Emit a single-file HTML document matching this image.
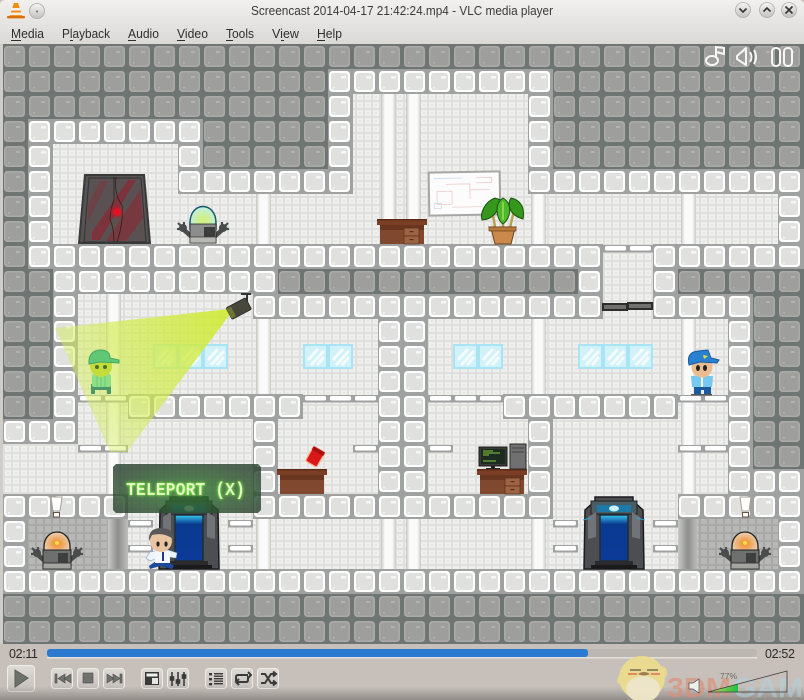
<!DOCTYPE html>
<html><head><meta charset="utf-8"><title>VLC</title>
<style>html,body{margin:0;padding:0;width:804px;height:700px;overflow:hidden;background:#c6bfba}svg{display:block}
text{font-family:"Liberation Sans",sans-serif}</style></head><body>
<svg xmlns="http://www.w3.org/2000/svg" width="804" height="700" viewBox="0 0 804 700">
<defs>
<pattern id="d" x="3" y="44" width="25" height="25" patternUnits="userSpaceOnUse">
<rect width="25" height="25" fill="#6f7573"/><rect x="1" y="2" width="21" height="21" rx="3.5" fill="#aaaaa8"/><rect x="2.500" y="3.500" width="18" height="18" rx="3" fill="#9e9e9c"/><rect x="13" y="7" width="4" height="2" fill="#b2b2b0"/><rect x="5" y="18" width="2" height="1.500" fill="#b2b2b0"/></pattern>
<pattern id="w" x="3" y="44" width="25" height="25" patternUnits="userSpaceOnUse">
<rect width="25" height="25" fill="#a0a2a2"/><rect x="1" y="2" width="21" height="21" rx="3.500" fill="#fff"/><rect x="3" y="4" width="17" height="17" rx="3" fill="#e0e0de"/><rect x="13" y="7" width="5" height="2.500" fill="#f6f6f6"/><rect x="5" y="18" width="2" height="1.500" fill="#f2f2f2"/></pattern>
<pattern id="b" x="3" y="44" width="8" height="8" patternUnits="userSpaceOnUse">
<rect width="8" height="8" fill="#efefee"/><rect width="8" height="2" fill="#dfdfde"/><rect width="2" height="8" fill="#dfdfde"/><rect x="4" y="4" width="2" height="2" fill="#e6e6e5"/></pattern>
<pattern id="s" x="3" y="44" width="8" height="8" patternUnits="userSpaceOnUse">
<rect width="8" height="8" fill="#b8b8b6"/><rect width="8" height="2" fill="#a8a8a6"/><rect width="2" height="8" fill="#a8a8a6"/></pattern>
<linearGradient id="title" x1="0" y1="0" x2="0" y2="1"><stop offset="0" stop-color="#f1f0ee"/><stop offset="1" stop-color="#dbd9d6"/></linearGradient>
<linearGradient id="btn" x1="0" y1="0" x2="0" y2="1"><stop offset="0" stop-color="#dedad6"/><stop offset="1" stop-color="#c4bfba"/></linearGradient>
<linearGradient id="circ" x1="0" y1="0" x2="0" y2="1"><stop offset="0" stop-color="#f4f4f2"/><stop offset="1" stop-color="#c4c2be"/></linearGradient>
<linearGradient id="pil" x1="0" y1="0" x2="1" y2="0"><stop offset="0" stop-color="#c4c4c2"/><stop offset=".25" stop-color="#fafafa"/><stop offset=".75" stop-color="#fafafa"/><stop offset="1" stop-color="#cacac8"/></linearGradient>
<linearGradient id="pilD" x1="0" y1="0" x2="1" y2="0"><stop offset="0" stop-color="#c8c8c6"/><stop offset=".5" stop-color="#8e8e8c"/><stop offset="1" stop-color="#c0c0be"/></linearGradient>
<radialGradient id="cone" gradientUnits="userSpaceOnUse" cx="230" cy="310" r="190"><stop offset="0" stop-color="#cfea30" stop-opacity=".9"/><stop offset=".6" stop-color="#d2ec50" stop-opacity=".68"/><stop offset="1" stop-color="#d4ee60" stop-opacity=".4"/></radialGradient>
<radialGradient id="greend" cx=".5" cy=".6" r=".6"><stop offset="0" stop-color="#d4f070"/><stop offset="1" stop-color="#bfeee8"/></radialGradient>
<radialGradient id="orad" cx=".5" cy=".55" r=".6"><stop offset="0" stop-color="#f28a20"/><stop offset="1" stop-color="#e8d8c8"/></radialGradient>
<radialGradient id="panelg" cx=".5" cy=".55" r=".6"><stop offset="0" stop-color="#2f7a2c"/><stop offset="1" stop-color="#2c4430"/></radialGradient>
<linearGradient id="volg" x1="0" y1="0" x2="1" y2="0"><stop offset="0" stop-color="#d8d060"/><stop offset="1" stop-color="#20c040"/></linearGradient>
<linearGradient id="darkbot" x1="0" y1="0" x2="0" y2="1"><stop offset="0" stop-color="#8a8682" stop-opacity="0"/><stop offset="1" stop-color="#7a7672" stop-opacity=".7"/></linearGradient>
<linearGradient id="tele" x1="0" y1="0" x2="0" y2="1"><stop offset="0" stop-color="#38c8f0"/><stop offset=".2" stop-color="#0a3a90"/><stop offset="1" stop-color="#0c3a98"/></linearGradient>

<g id="plat"><rect width="25" height="7.500" fill="#a0a2a2"/><rect x="2" y="1" width="21" height="4.500" rx="1.500" fill="#fff"/></g>
<g id="pane"><rect width="25" height="25" fill="#a8e4f4"/><rect x="2" y="2" width="21" height="21" fill="#d2f2fa"/><path d="M5 16 L15 5 M8 21 L21 7 M14 21 L21 13" stroke="#f4fcff" stroke-width="3" fill="none"/></g>
<g id="desk"><rect x="0" y="0" width="50" height="6" fill="#7a3f24"/><rect x="0" y="0" width="50" height="1.500" fill="#5c2c18"/><rect x="3" y="6" width="44" height="19" fill="#80492f"/><rect x="3" y="6" width="44" height="5" fill="#6a3620"/></g>
<g id="draw"><rect x="0" y="0" width="15" height="8" fill="#9c6344" stroke="#5c3018" stroke-width=".7"/><rect x="0" y="8" width="15" height="8" fill="#9c6344" stroke="#5c3018" stroke-width=".7"/><rect x="5.500" y="3" width="4" height="1.200" fill="#5c3018"/><rect x="5.500" y="11" width="4" height="1.200" fill="#5c3018"/></g>
<g id="arm"><path d="M3 3 L-5 -4" stroke="#4a4c4c" stroke-width="4.500"/><circle cx="-6" cy="-6" r="4" fill="#4a4c4c"/><path d="M-8 -8 L-11 -11 M-5 -9 L-5 -12 M-9 -5 L-12 -5" stroke="#4a4c4c" stroke-width="2.200"/></g>
<g id="robotBase"><rect x="-14" y="-19" width="28" height="19" fill="#6e7070" stroke="#222" stroke-width="1"/><rect x="-14" y="-6" width="28" height="6" fill="#a4a4a2" stroke="#222" stroke-width=".8"/><rect x="1" y="-16" width="10" height="10" fill="#3e3e3e"/></g>
<g id="teleporter"><path d="M2 13 L12 4 L12 0 L50 0 L50 4 L60 13 L61 72 L1 72 Z" fill="#4c4e52" stroke="#1c1c1e" stroke-width="1.500"/><rect x="8" y="4" width="46" height="13" fill="#4a5c64" stroke="#222" stroke-width="1"/><rect x="14" y="8" width="34" height="7" fill="#1c7aa8"/><ellipse cx="31" cy="11.500" rx="5" ry="3" fill="#c8f0ff"/><rect x="17" y="18" width="28" height="46" fill="url(#tele)" stroke="#1e2e38" stroke-width="1.500"/><path d="M5 20 L13 15 L13 40 L5 42 Z M57 20 L49 15 L49 40 L57 42 Z" fill="#707478"/><rect x="12" y="64" width="38" height="4" fill="#2a2a2c"/><rect x="8" y="68" width="46" height="4" fill="#1a1a1c"/></g>
<g id="excl"><path d="M0 0 L11 0 L9 14 L2 14 Z" fill="#fff" stroke="#a8a298" stroke-width="1"/><rect x="2.500" y="15.500" width="6" height="4.500" fill="#fff" stroke="#6a5040" stroke-width="1"/></g>
</defs>

<rect width="804" height="700" fill="#c6bfba"/>
<!-- title bar -->
<path d="M0 44 V5 Q0 0 5 0 H799 Q804 0 804 5 V44 Z" fill="url(#title)"/>
<rect x="0" y="44" width="3" height="600" fill="#d0cdc9"/>
<!-- VLC cone -->
<g><path d="M14 3 L18 3 L23 18 L9 18 Z" fill="#f08a10"/><rect x="11.300" y="8" width="9" height="2.600" fill="#f4f0e8"/><rect x="10" y="12.500" width="12" height="2.600" fill="#f4f0e8"/><rect x="7" y="16" width="18" height="2.400" rx="1" fill="#d87008"/></g>
<circle cx="37" cy="11" r="7.500" fill="url(#circ)" stroke="#aaa8a4" stroke-width=".8"/><circle cx="37" cy="11.500" r="1" fill="#666"/>
<text x="251" y="15" font-size="12.500" fill="#3a3a38" textLength="302" lengthAdjust="spacingAndGlyphs">Screencast 2014-04-17 21:42:24.mp4 - VLC media player</text>
<circle cx="743" cy="10" r="7.500" fill="url(#circ)" stroke="#b0aeaa" stroke-width=".8"/><path d="M739.500 8.500 L743 12 L746.500 8.500" stroke="#333" stroke-width="1.600" fill="none"/>
<circle cx="767" cy="10" r="7.500" fill="url(#circ)" stroke="#b0aeaa" stroke-width=".8"/><path d="M763.500 11.500 L767 8 L770.500 11.500" stroke="#333" stroke-width="1.600" fill="none"/>
<circle cx="789" cy="10" r="7.500" fill="url(#circ)" stroke="#b0aeaa" stroke-width=".8"/><path d="M785.500 6.500 L792.500 13.500 M792.500 6.500 L785.500 13.500" stroke="#333" stroke-width="1.600" fill="none"/>
<!-- menu -->
<g font-size="12.500" fill="#2e2e2c">
<text x="11" y="38" textLength="33" lengthAdjust="spacingAndGlyphs">Media</text><rect x="11" y="40" width="10" height="1" fill="#2e2e2c"/>
<text x="62" y="38" textLength="48" lengthAdjust="spacingAndGlyphs">Playback</text><rect x="70" y="40" width="3" height="1" fill="#2e2e2c"/>
<text x="128" y="38" textLength="31" lengthAdjust="spacingAndGlyphs">Audio</text><rect x="128" y="40" width="8" height="1" fill="#2e2e2c"/>
<text x="177" y="38" textLength="31" lengthAdjust="spacingAndGlyphs">Video</text><rect x="177" y="40" width="8" height="1" fill="#2e2e2c"/>
<text x="226" y="38" textLength="28" lengthAdjust="spacingAndGlyphs">Tools</text><rect x="226" y="40" width="7" height="1" fill="#2e2e2c"/>
<text x="272" y="38" textLength="27" lengthAdjust="spacingAndGlyphs">View</text><rect x="281" y="40" width="3" height="1" fill="#2e2e2c"/>
<text x="317" y="38" textLength="25" lengthAdjust="spacingAndGlyphs">Help</text><rect x="317" y="40" width="8" height="1" fill="#2e2e2c"/>
</g>

<!-- game background -->
<rect x="3" y="44" width="801" height="600" fill="url(#b)"/>
<!-- pillars -->
<g fill="url(#pil)">
<rect x="381" y="94" width="15" height="150"/><rect x="406" y="94" width="15" height="150"/>
<rect x="256" y="194" width="15" height="50"/><rect x="531" y="194" width="15" height="50"/><rect x="681" y="194" width="15" height="50"/>
<rect x="106" y="294" width="15" height="200"/><rect x="256" y="319" width="15" height="75"/><rect x="531" y="319" width="15" height="75"/><rect x="681" y="319" width="15" height="175"/>
<rect x="256" y="519" width="15" height="50"/><rect x="381" y="519" width="15" height="50"/><rect x="406" y="519" width="15" height="50"/><rect x="531" y="519" width="15" height="50"/>
</g>
<!-- shaded rooms -->
<rect x="28" y="519" width="82" height="50" fill="url(#s)"/><rect x="108" y="519" width="20" height="50" fill="url(#pilD)"/>
<rect x="695" y="519" width="83" height="50" fill="url(#s)"/><rect x="678" y="519" width="20" height="50" fill="url(#pilD)"/>

<!-- dark tiles -->
<g fill="url(#d)">
<rect x="3" y="44" width="801" height="25"/><rect x="3" y="69" width="325" height="50"/><rect x="553" y="69" width="251" height="100"/>
<rect x="3" y="119" width="25" height="150"/><rect x="203" y="119" width="125" height="50"/><rect x="3" y="269" width="50" height="150"/>
<rect x="278" y="269" width="300" height="25"/><rect x="678" y="269" width="126" height="25"/><rect x="753" y="294" width="51" height="175"/>
<rect x="3" y="594" width="801" height="50"/>
</g>
<!-- white tiles -->
<g fill="url(#w)">
<rect x="328" y="69" width="225" height="25"/><rect x="328" y="94" width="25" height="75"/><rect x="528" y="94" width="25" height="75"/>
<rect x="28" y="119" width="175" height="25"/><rect x="28" y="144" width="25" height="100"/><rect x="178" y="144" width="25" height="25"/>
<rect x="178" y="169" width="175" height="25"/><rect x="528" y="169" width="276" height="25"/><rect x="778" y="194" width="26" height="50"/>
<rect x="28" y="244" width="575" height="25"/><rect x="653" y="244" width="151" height="25"/>
<rect x="53" y="269" width="225" height="25"/><rect x="578" y="269" width="25" height="25"/><rect x="653" y="269" width="25" height="25"/>
<rect x="53" y="294" width="25" height="125"/><rect x="253" y="294" width="350" height="25"/><rect x="653" y="294" width="100" height="25"/>
<rect x="378" y="319" width="50" height="175"/><rect x="728" y="319" width="25" height="150"/>
<rect x="128" y="394" width="175" height="25"/><rect x="503" y="394" width="175" height="25"/>
<rect x="728" y="469" width="76" height="25"/><rect x="3" y="419" width="75" height="25"/>
<rect x="253" y="419" width="25" height="75"/><rect x="528" y="419" width="25" height="75"/>
<rect x="3" y="494" width="125" height="25"/><rect x="253" y="494" width="300" height="25"/><rect x="678" y="494" width="126" height="25"/>
<rect x="3" y="519" width="25" height="50"/><rect x="778" y="519" width="26" height="50"/>
<rect x="3" y="569" width="801" height="25"/>
</g>

<!-- thin platforms -->
<use href="#plat" x="78" y="395"/><use href="#plat" x="103" y="395"/><use href="#plat" x="303" y="395"/><use href="#plat" x="328" y="395"/><use href="#plat" x="353" y="395"/>
<use href="#plat" x="428" y="395"/><use href="#plat" x="453" y="395"/><use href="#plat" x="478" y="395"/><use href="#plat" x="678" y="395"/><use href="#plat" x="703" y="395"/>
<use href="#plat" x="78" y="445"/><use href="#plat" x="103" y="445"/><use href="#plat" x="353" y="445"/><use href="#plat" x="428" y="445"/><use href="#plat" x="678" y="445"/><use href="#plat" x="703" y="445"/>
<use href="#plat" x="603" y="245"/><use href="#plat" x="628" y="245"/>
<use href="#plat" x="128" y="520"/><use href="#plat" x="128" y="545"/><use href="#plat" x="228" y="520"/><use href="#plat" x="228" y="545"/>
<use href="#plat" x="553" y="520"/><use href="#plat" x="553" y="545"/><use href="#plat" x="653" y="520"/><use href="#plat" x="653" y="545"/>
<rect x="602" y="303" width="26" height="8" fill="#2c2c2c"/><rect x="604" y="305" width="22" height="4" fill="#706f6c"/>
<rect x="627" y="302" width="26" height="8" fill="#2c2c2c"/><rect x="629" y="304" width="22" height="4" fill="#706f6c"/>

<!-- windows -->
<use href="#pane" x="153" y="344"/><use href="#pane" x="178" y="344"/><use href="#pane" x="203" y="344"/>
<use href="#pane" x="303" y="344"/><use href="#pane" x="328" y="344"/>
<use href="#pane" x="453" y="344"/><use href="#pane" x="478" y="344"/>
<use href="#pane" x="578" y="344"/><use href="#pane" x="603" y="344"/><use href="#pane" x="628" y="344"/>

<!-- red door -->
<path d="M85 175 H144 L150 243 H79 Z" fill="#555353" stroke="#3a3a3a" stroke-width="2"/>
<path d="M89 178 H141 L146 242 H84 Z" fill="#5a5252" stroke="#333" stroke-width="1"/>
<path d="M92 232 L128 180 L136 180 L100 240 L92 240 Z" fill="#8a2a34" opacity=".75"/>
<path d="M106 241 L140 190 L143 218 L126 241 Z" fill="#8a2a34" opacity=".6"/>
<path d="M88 205 L100 181 L108 181 L88 222 Z" fill="#8a2a34" opacity=".4"/>
<path d="M114 177 V200 Q110 210 110 220 Q114 228 114 242 M116 177 Q114 195 122 205 Q124 220 117 242" stroke="#2a2020" stroke-width=".8" fill="none"/>
<circle cx="117" cy="212" r="6.500" fill="#d01020" opacity=".4"/><circle cx="117" cy="212" r="3.800" fill="#e81020"/>
<!-- robot green -->
<g transform="translate(203,243)"><use href="#arm" transform="translate(-14,-9)"/><use href="#arm" transform="translate(14,-9) scale(-1,1)"/>
<path d="M-13 -14 V-20 C-13 -42 13 -42 13 -20 V-14 Z" fill="url(#greend)" stroke="#14586a" stroke-width="1.500"/>
<rect x="-13" y="-19" width="26" height="19" fill="#8b8d8c" stroke="#222" stroke-width=".8"/><rect x="-13" y="-6" width="26" height="6" fill="#b8b8b6" stroke="#222" stroke-width=".6"/><rect x="1" y="-16" width="11" height="10" fill="#3c3c3c"/></g>

<!-- desk 1 -->
<g transform="translate(377,219)"><use href="#desk"/><use href="#draw" x="27" y="9"/></g>
<!-- whiteboard -->
<g transform="rotate(-1 464 194)"><rect x="429" y="172" width="71" height="43" fill="#fcfcfc" stroke="#a6a6a4" stroke-width="2"/>
<path d="M437 191 H452 V204 H437 Z M446 184 H470 V199 M470 190 H490 M452 207 H482 M476 178 H492 V183 H476" stroke="#e8c4c0" stroke-width=".7" fill="none"/><path d="M434 203 H441 V208 H434 Z M434 178 H462" stroke="#c4d8ec" stroke-width=".7" fill="none"/></g>
<!-- plant -->
<g><path d="M495 228 Q494 218 492 212 M503 228 V212 M510 228 Q512 218 514 212" stroke="#b8a050" stroke-width="2.500" fill="none"/>
<path d="M495 198 C484 202 480 214 482 220 C491 220 499 212 501 200 Z" fill="#35981c" stroke="#1a5010"/>
<path d="M511 198 C507 204 509 215 523 219 C525 208 521 200 511 198 Z" fill="#35981c" stroke="#1a5010"/>
<path d="M503 198 C494 204 496 219 503 224 C511 218 513 204 503 198 Z" fill="#4eb82a" stroke="#1a5010"/>
<path d="M503 202 V220" stroke="#9edc5c" stroke-width="1.500"/>
<path d="M489 227 H516 L514 232 L511 244 H495 L492 232 Z" fill="#cb8a4c" stroke="#6a4020"/><rect x="489" y="227" width="27" height="4" fill="#b87838" stroke="#6a4020" stroke-width=".7"/></g>

<!-- cone light -->
<path d="M229 309 L55 328 L110 452 L127 452 L231 313 Z" fill="url(#cone)"/>
<!-- camera -->
<g><path d="M247 294 V302" stroke="#333" stroke-width="2"/><rect x="241" y="293" width="10" height="2" fill="#333"/>
<g transform="rotate(-28 239 309)"><rect x="228" y="302" width="22" height="13" rx="1.500" fill="#47473c" stroke="#2a2a26" stroke-width=".8"/><rect x="228" y="303" width="5" height="11" fill="#6e7438"/></g></g>
<!-- green guard -->
<g><path d="M91 384 H111 V394 H107 V390 H95 V394 H91 Z" fill="#4a9868"/><rect x="92" y="374" width="19" height="13" rx="2" fill="#8ee088"/><path d="M97 374 V387 M101 374 V387 M105 374 V387" stroke="#6cc870"/>
<circle cx="101" cy="366" r="11" fill="#c4dc3a"/><circle cx="97" cy="367" r="2" fill="#4a7030"/><circle cx="105" cy="367" r="2" fill="#4a7030"/>
<path d="M89 364 Q88 351 100 350 Q110 350 110 358 L119 360 V363 L100 362 Z" fill="#60c874" stroke="#48a464"/></g>
<!-- blue guard -->
<g><rect x="691" y="394" width="21" height="1.500" fill="#555"/><path d="M694 384 H711 L711 394 H704 V390 H701 V394 H694 Z" fill="#1a5aa0"/><path d="M691 376 H713 L712 387 H692 Z" fill="#78c8f0"/><rect x="701" y="376" width="2" height="11" fill="#f0f8fc"/>
<circle cx="702" cy="367" r="10.500" fill="#eabc90"/><ellipse cx="698" cy="368" rx="2" ry="3" fill="#222"/><ellipse cx="705" cy="368" rx="2" ry="3" fill="#222"/>
<path d="M689 365 Q686 352 698 351 L708 350 L711 358 L719 360 L717 363 L700 362 Z" fill="#2a80d0" stroke="#1a5aa0"/><path d="M703 355 L708 356 L704 359 Z" fill="#e0e040"/></g>

<!-- desk 2 & card -->
<g transform="translate(277,469)"><use href="#desk"/></g>
<g transform="rotate(30 315 456)"><rect x="309" y="448" width="13" height="17" rx="2" fill="#d81818" stroke="#f8b090" stroke-width="1.200"/><rect x="309" y="448" width="13" height="4" fill="#a81010"/></g>
<!-- desk 3 + computer -->
<g transform="translate(477,469)"><use href="#desk"/><use href="#draw" x="28" y="9"/></g>
<rect x="479" y="447" width="28" height="19" fill="#3a3a3a" stroke="#1c1c1c"/><rect x="481" y="449" width="24" height="15" fill="#1c2c20"/><path d="M483 451 H493 M483 453 H500 M483 455 H489 M483 461 H496" stroke="#8cc840" stroke-width="1"/><rect x="491" y="466" width="4" height="2" fill="#222"/><rect x="486" y="468" width="14" height="1" fill="#222"/>
<rect x="510" y="444" width="16" height="25" fill="#707070" stroke="#2a2a2a"/><path d="M512 448 H524 M512 452 H524" stroke="#444"/>

<!-- teleporters -->
<use href="#teleporter" x="158" y="497"/>
<use href="#teleporter" x="583" y="497"/>
<path d="M591 518 L583 520 M636 518 L645 520" stroke="#38a0d0" stroke-width="1"/>
<!-- panel -->
<path d="M116 464 H258 L261 467 V510 L258 513 H116 L113 510 V467 Z" fill="url(#panelg)" fill-opacity=".82"/>
<text x="126" y="495" font-size="18" font-weight="bold" textLength="119" lengthAdjust="spacingAndGlyphs" fill="#eafcd0" stroke="#80e040" stroke-width=".35" style="font-family:'Liberation Mono',monospace;filter:drop-shadow(0 0 1.500px #7cf040)">TELEPORT (X)</text>
<!-- player -->
<g><path d="M150 552 L146 558 L150 561 L162 556 L176 558 L177 553 L168 550 Z" fill="#eef4fc" stroke="#8aa8c8" stroke-width=".6"/><path d="M149 566 L156 561 L168 561 L174 566 L172 569 L160 566 L150 569 Z" fill="#1f4a9c"/><rect x="155" y="551" width="15" height="12" fill="#f4f8fc"/><rect x="162" y="552" width="2" height="9" fill="#1f3a8c"/>
<circle cx="161" cy="541" r="11" fill="#e8c4a0"/><path d="M149 541 Q148 528 161 528 Q174 528 173 539 Q164 532 152 535 Z" fill="#58585a"/><ellipse cx="158" cy="544" rx="1.600" ry="2.600" fill="#222"/><ellipse cx="166" cy="544" rx="1.600" ry="2.600" fill="#222"/></g>

<!-- exclamations -->
<use href="#excl" x="51" y="497"/><use href="#excl" x="740" y="497"/>
<!-- orange robots -->
<g transform="translate(57,569)"><use href="#arm" transform="translate(-14,-10)"/><use href="#arm" transform="translate(14,-10) scale(-1,1)"/>
<path d="M-13 -16 V-22 C-13 -42 13 -42 13 -22 V-16 Z" fill="url(#orad)" stroke="#222" stroke-width="1.300"/><circle cy="-26" r="2" fill="#f8e040"/><use href="#robotBase"/></g>
<g transform="translate(745,569)"><use href="#arm" transform="translate(-14,-10)"/><use href="#arm" transform="translate(14,-10) scale(-1,1)"/>
<path d="M-13 -16 V-22 C-13 -42 13 -42 13 -22 V-16 Z" fill="url(#orad)" stroke="#222" stroke-width="1.300"/><circle cy="-26" r="2" fill="#f8e040"/><use href="#robotBase"/></g>

<!-- HUD icons -->
<g fill="none" stroke="#f6f6f4" stroke-width="2">
<path d="M716 58 V47 L724 48 V54 L716 52"/><ellipse cx="712" cy="60.500" rx="6" ry="4.500"/>
<path d="M737 56 L746 48 V65 L737 59 Z" stroke-linejoin="round"/><path d="M750 52 Q753 57 750 62 M754 50 Q758 57 754 64"/>
<rect x="772" y="48" width="8" height="18" rx="3.500"/><rect x="784" y="48" width="8" height="18" rx="3.500"/>
</g>

<!-- control bar -->
<rect x="0" y="644" width="804" height="56" fill="#c6bfba"/>
<text x="9" y="658" font-size="12.500" fill="#2a2a28" textLength="29">02:11</text>
<text x="765" y="658" font-size="12.500" fill="#2a2a28" textLength="30">02:52</text>
<rect x="47" y="649" width="710" height="8" rx="3" fill="#bdb7b2"/><rect x="47" y="657" width="710" height="1.500" fill="#e4e0dc"/>
<rect x="47" y="649" width="541" height="8" rx="3" fill="#2a7ad0"/>
<g fill="url(#btn)" stroke="#efecea" stroke-width="1">
<rect x="7.500" y="665.500" width="27" height="26" rx="3"/>
<rect x="51.500" y="668.500" width="21" height="20" rx="3"/><rect x="77.500" y="668.500" width="21" height="20" rx="3"/><rect x="103.500" y="668.500" width="21" height="20" rx="3"/>
<rect x="141.500" y="668.500" width="21" height="20" rx="3"/><rect x="167.500" y="668.500" width="21" height="20" rx="3"/>
<rect x="205.500" y="668.500" width="21" height="20" rx="3"/><rect x="231.500" y="668.500" width="21" height="20" rx="3"/><rect x="257.500" y="668.500" width="21" height="20" rx="3"/>
</g>
<path d="M15 670 L28 678 L15 687 Z" fill="#6d706a" stroke="#5a5c58"/>
<g fill="#707270" stroke="#4c4c4a" stroke-width=".6">
<rect x="55" y="674" width="2" height="9"/><path d="M65 674 V683 L58 678.500 Z M71 674 V683 L64 678.500 Z"/>
<rect x="83" y="673" width="10" height="10"/>
<path d="M107 674 V683 L114 678.500 Z M113 674 V683 L120 678.500 Z"/><rect x="120" y="674" width="2" height="9"/>
</g>
<rect x="145" y="672" width="14" height="13" fill="#3a3a38"/><rect x="146.500" y="673.500" width="11" height="3" fill="#f0f0ee"/><rect x="152" y="678" width="6" height="6" fill="#e4e4e2"/>
<g stroke="#3a3a38" stroke-width="1.600" fill="#3a3a38"><path d="M172 672 V686 M178 672 V686 M184 672 V686" fill="none"/><rect x="170.500" y="677" width="3" height="3"/><rect x="176.500" y="680" width="3" height="3"/><rect x="182.500" y="675" width="3" height="3"/></g>
<g fill="#3a3a38"><rect x="209" y="673" width="3" height="2.400"/><rect x="209" y="678" width="3" height="2.400"/><rect x="209" y="683" width="3" height="2.400"/><rect x="214" y="673" width="9" height="1.400"/><rect x="214" y="675.500" width="9" height="1.400"/><rect x="214" y="678" width="9" height="1.400"/><rect x="214" y="680.500" width="9" height="1.400"/><rect x="214" y="683" width="9" height="1.400"/></g>
<path d="M236 681 V677 Q236 675 238 675 H248 M248 672 L251 675 L248 678 M248 676 V680 Q248 682 246 682 H236 M239 679 L236 682 L239 685" stroke="#3a3a38" stroke-width="2" fill="none"/>
<path d="M261 674 H265 L271 683 H275 M261 683 H265 L271 674 H275 M273 671.500 L276 674 L273 676.500 M273 680.500 L276 683 L273 685.500" stroke="#3a3a38" stroke-width="2" fill="none"/>
<rect x="0" y="686" width="804" height="14" fill="url(#darkbot)"/>

<!-- watermark -->
<g opacity=".95"><path d="M618 684 Q615 677 623 673 L630 678 Z M660 666 Q668 666 667 675 L660 684 Z" fill="#e8d892"/>
<ellipse cx="642" cy="678" rx="23" ry="22" fill="#ecdc8e"/><ellipse cx="643" cy="689" rx="17" ry="13" fill="#f0e8c8"/>
<path d="M630 670 H641 M647 670 H658" stroke="#5a5040" stroke-width="1.300"/><rect x="628" y="673" width="9" height="2" fill="#e48860"/><rect x="651" y="673" width="9" height="2" fill="#e48860"/><path d="M638 674 Q644 670 650 674 Q644 677 638 674 Z" fill="#a07850"/></g>
<text x="667" y="697" font-size="28" font-weight="bold" fill="#de8e78" opacity=".65" textLength="64" lengthAdjust="spacingAndGlyphs">3DM</text>
<text x="733" y="697" font-size="28" font-weight="bold" fill="#b0d2de" opacity=".55" textLength="90" lengthAdjust="spacingAndGlyphs">GAME</text>
<!-- volume -->
<path d="M689 683 L693 683 L699 679 V693 L693 689 L689 689 Z" fill="#eef0ec" stroke="#4a4a4a" stroke-width=".7"/>
<path d="M708 692 L738 684 V692 Z" fill="url(#volg)"/>
<path d="M708 692 L787 671 V692 Z" fill="none" stroke="#3a3a38" stroke-width=".8"/>
<text x="720" y="679" font-size="8.500" fill="#6a6a68">77%</text>
</svg>
</body></html>
